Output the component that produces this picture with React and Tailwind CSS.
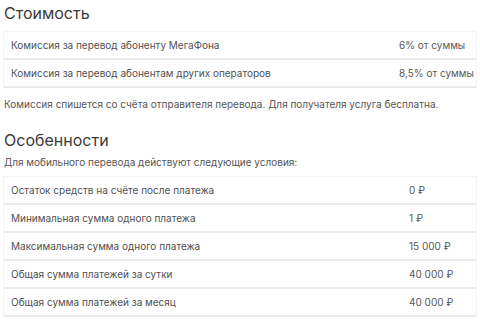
import React from 'react';

const costRows = [
  { label: 'Комиссия за перевод абоненту МегаФона', value: '6% от суммы' },
  { label: 'Комиссия за перевод абонентам других операторов', value: '8,5% от суммы' },
];

const limitRows = [
  { label: 'Остаток средств на счёте после платежа', value: '0 ₽' },
  { label: 'Минимальная сумма одного платежа', value: '1 ₽' },
  { label: 'Максимальная сумма одного платежа', value: '15 000 ₽' },
  { label: 'Общая сумма платежей за сутки', value: '40 000 ₽' },
  { label: 'Общая сумма платежей за месяц', value: '40 000 ₽' },
];

const Table = ({ rows, valueCol }) => (
  <div className="mx-[-1px] border border-b-0 border-[#f4f4f4]">
    {rows.map((row) => (
      <div
        key={row.label}
        className="flex h-[28px] items-center border-b-2 border-[#ebebeb] text-[10px]"
      >
        <span className="flex-1 pl-[7px] text-[#505050]">{row.label}</span>
        <span className={`${valueCol} text-[#585858]`}>{row.value}</span>
      </div>
    ))}
  </div>
);

const App = () => {
  return (
    <div className="h-[320px] w-[480px] overflow-hidden bg-white px-[4px] font-['Inter',sans-serif]">
      <h2 className="h-[31px] pt-[3px] text-[16px] leading-[20px] text-[#3a3a3a]">
        Стоимость
      </h2>
      <Table rows={costRows} valueCol="w-[77px]" />
      <p className="mt-[10px] text-[10px] leading-[13px] text-[#555]">
        Комиссия спишется со счёта отправителя перевода. Для получателя услуга бесплатна.
      </p>
      <h2 className="mt-[19px] text-[16px] leading-[20px] text-[#3a3a3a]">
        Особенности
      </h2>
      <p className="mt-[6px] h-[20px] text-[10px] leading-[13px] text-[#555]">
        Для мобильного перевода действуют следующие условия:
      </p>
      <Table rows={limitRows} valueCol="w-[67px]" />
    </div>
  );
};

export default App;
